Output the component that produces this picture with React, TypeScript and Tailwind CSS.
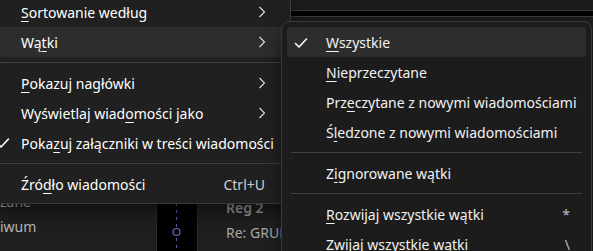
import { ReactNode } from "react";

const font = { fontFamily: '"Noto Sans", "Open Sans", sans-serif' };

function Chevron() {
  return (
    <svg width="8" height="12" viewBox="0 0 8 12" className="text-[#e0e0e0]">
      <path d="M1.5 1 L6.5 6 L1.5 11" fill="none" stroke="currentColor" strokeWidth="1.1" />
    </svg>
  );
}

function Check({ className }: { className?: string }) {
  return (
    <svg width="14" height="12" viewBox="0 0 14 12" className={className}>
      <path d="M1.5 6.5 L5 10 L12.5 2" fill="none" stroke="currentColor" strokeWidth="1.6" strokeLinecap="round" strokeLinejoin="round" />
    </svg>
  );
}

function U({ children }: { children: ReactNode }) {
  return <span className="underline underline-offset-[3px] decoration-1">{children}</span>;
}

function LeftRow({ children, active, sub, shortcut, checked }: { children: ReactNode; active?: boolean; sub?: boolean; shortcut?: string; checked?: boolean }) {
  return (
    <div className={`relative flex h-[30px] items-center whitespace-nowrap rounded-[4px] pl-[22px] pr-[20px] ${active ? "bg-[#2d2d2d]" : ""}`}>
      {checked && <Check className="absolute left-[-3px] top-[9px] text-white" />}
      <span className="flex-1 text-white">{children}</span>
      {shortcut && <span className="mr-[1px] text-[#cfcfcf]">{shortcut}</span>}
      {sub && <Chevron />}
    </div>
  );
}

function SubRow({ children, active, shortcut, checked }: { children: ReactNode; active?: boolean; shortcut?: string; checked?: boolean }) {
  return (
    <div className={`flex h-[30px] items-center whitespace-nowrap rounded-[4px] pl-[39px] pr-[16px] ${active ? "bg-[#2d2d2d]" : ""}`}>
      <span className="relative flex-1 text-[#f2f2f2]">
        {checked && <Check className="absolute left-[-32px] top-[5px] text-white" />}
        {children}
      </span>
      {shortcut && <span className="text-[#bdbdbd]">{shortcut}</span>}
    </div>
  );
}

function Sep({ className }: { className?: string }) {
  return (
    <div className={`flex h-[11px] items-center ${className ?? ""}`}>
      <div className="h-px w-full bg-[#3e3e3e]" />
    </div>
  );
}

export default function App() {
  return (
    <div className="relative h-[251px] w-[593px] overflow-hidden bg-[#1f1f1f] text-[14px]" style={font}>
      {/* underlying app */}
      <div className="flex h-full flex-col">
        <div className="flex h-[21px] flex-col bg-[#1c1c1c]">
          <div className="h-[10px]" />
          <div className="h-[7px] border-y border-[#3a3a3a] bg-black" />
        </div>
        <div className="flex flex-1">
          <div className="flex w-[157px] flex-col border-r border-[#2a2a2a] pt-[168px] text-[#b5b5b5]">
            <div className="h-[25px] leading-[25px]">zane</div>
            <div className="h-[25px] leading-[25px]">iwum</div>
          </div>
          <div className="w-[40px] bg-black">
            <svg width="40" height="230" viewBox="0 0 40 230">
              <line x1="19.5" y1="0" x2="19.5" y2="230" stroke="#5c5aa8" strokeWidth="1" strokeDasharray="3 4" />
              <circle cx="19.5" cy="211" r="3.5" fill="black" stroke="#6d6bc0" strokeWidth="1.2" />
            </svg>
          </div>
          <div className="flex flex-1 flex-col whitespace-nowrap border-l border-[#2a2a2a] pl-[28px] pt-[174px] text-[#a8a8a8]">
            <div className="h-[25px] font-semibold leading-[25px] text-[#9a9a9a]">Reg 2</div>
            <div className="h-[25px] leading-[25px]">Re: GRUPA</div>
          </div>
        </div>
      </div>

      {/* left context menu */}
      <div className="absolute left-[-6px] top-[-8px] w-[297px] rounded-[8px] border border-[#3a3a3a] bg-[#202020] px-[4px] py-[4px] shadow-[0_8px_16px_rgba(0,0,0,0.5)]">
        <LeftRow sub>
          <U>S</U>ortowanie według
        </LeftRow>
        <LeftRow sub active>
          Wą<U>t</U>ki
        </LeftRow>
        <Sep className="-mx-[4px]" />
        <LeftRow sub>
          <U>P</U>okazuj nagłówki
        </LeftRow>
        <LeftRow sub>
          Wyświetlaj wiad<U>o</U>mości jako
        </LeftRow>
        <LeftRow checked>
          Poka<U>z</U>uj załączniki w treści wiadomości
        </LeftRow>
        <Sep className="-mx-[4px]" />
        <LeftRow shortcut="Ctrl+U">
          Źró<U>d</U>ło wiadomości
        </LeftRow>
      </div>

      {/* submenu */}
      <div className="absolute left-[281px] top-[21px] w-[311px] rounded-[8px] border border-[#3a3a3a] bg-[#1c1c1c] px-[5px] pt-[5px] pb-[4px] shadow-[0_8px_16px_rgba(0,0,0,0.5)]">
        <SubRow active checked>
          <U>W</U>szystkie
        </SubRow>
        <SubRow>
          <U>N</U>ieprzeczytane
        </SubRow>
        <SubRow>
          Prz<U>e</U>czytane z nowymi wiadomościami
        </SubRow>
        <SubRow>
          Ś<U>l</U>edzone z nowymi wiadomościami
        </SubRow>
        <Sep className="mx-[4px]" />
        <SubRow>
          Z<U>i</U>gnorowane wątki
        </SubRow>
        <Sep className="mx-[4px]" />
        <SubRow shortcut="*">
          <U>R</U>ozwijaj wszystkie wątki
        </SubRow>
        <SubRow shortcut="\">
          Zwijaj wszystkie wąt<U>k</U>i
        </SubRow>
      </div>
    </div>
  );
}
